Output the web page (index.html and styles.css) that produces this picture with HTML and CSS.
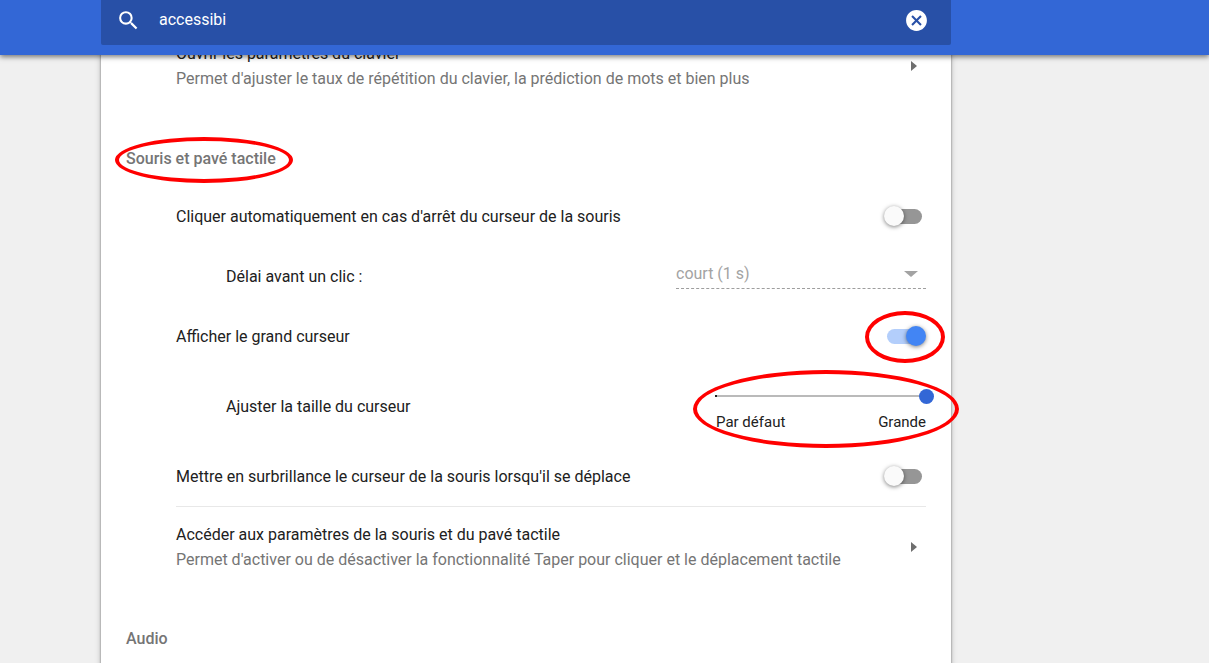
FILE: index.html
```html
<!DOCTYPE html>
<html lang="fr">
<head>
    <meta charset="UTF-8">
    <meta name="viewport" content="width=device-width, initial-scale=1.0">
    <title>Paramètres</title>
    <link rel="stylesheet" href="styles.css">
</head>
<body>
    <header class="toolbar">
        <form class="search" role="search">
            <svg class="search-icon" viewBox="0 0 24 24" aria-hidden="true">
                <path d="M15.5 14h-.79l-.28-.27A6.47 6.47 0 0 0 16 9.5 6.5 6.5 0 1 0 9.5 16c1.61 0 3.09-.59 4.23-1.57l.27.28v.79l5 4.99L20.49 19l-4.99-5zm-6 0C7.01 14 5 11.99 5 9.5S7.01 5 9.5 5 14 7.01 14 9.5 11.99 14 9.5 14z"/>
            </svg>
            <input type="text" id="search" value="accessibi" aria-label="Rechercher">
            <button type="reset" class="clear" aria-label="Effacer">
                <svg viewBox="0 0 24 24" aria-hidden="true">
                    <path d="M12 2C6.47 2 2 6.47 2 12s4.47 10 10 10 10-4.47 10-10S17.53 2 12 2zm5 13.59L15.59 17 12 13.41 8.41 17 7 15.59 10.59 12 7 8.41 8.41 7 12 10.59 15.59 7 17 8.41 13.41 12 17 15.59z"/>
                </svg>
            </button>
        </form>
    </header>

    <main>
        <div class="card">
            <a href="#clavier" class="row tall">
                <span class="text">
                    Ouvrir les paramètres du clavier
                    <small>Permet d'ajuster le taux de répétition du clavier, la prédiction de mots et bien plus</small>
                </span>
                <span class="arrow"></span>
            </a>

            <h2><span class="marked mark-title">Souris et pavé tactile</span></h2>

            <div class="row">
                <label for="autoclick">Cliquer automatiquement en cas d'arrêt du curseur de la souris</label>
                <input type="checkbox" class="toggle" id="autoclick">
            </div>
            <div class="row sub">
                <label for="delay">Délai avant un clic :</label>
                <div class="dropdown">
                    <select id="delay" disabled>
                        <option>court (1 s)</option>
                    </select>
                </div>
            </div>
            <div class="row">
                <label for="large-cursor">Afficher le grand curseur</label>
                <span class="marked mark-toggle">
                    <input type="checkbox" class="toggle" id="large-cursor" checked>
                </span>
            </div>
            <div class="row sub tall">
                <label for="cursor-size">Ajuster la taille du curseur</label>
                <div class="slider marked mark-slider">
                    <input type="range" id="cursor-size" min="0" max="100" value="100">
                    <div class="slider-labels">
                        <span>Par défaut</span>
                        <span>Grande</span>
                    </div>
                </div>
            </div>
            <div class="row">
                <label for="highlight">Mettre en surbrillance le curseur de la souris lorsqu'il se déplace</label>
                <input type="checkbox" class="toggle" id="highlight">
            </div>
            <a href="#souris" class="row tall line">
                <span class="text">
                    Accéder aux paramètres de la souris et du pavé tactile
                    <small>Permet d'activer ou de désactiver la fonctionnalité Taper pour cliquer et le déplacement tactile</small>
                </span>
                <span class="arrow"></span>
            </a>

            <h2>Audio</h2>
        </div>
    </main>
</body>
</html>
```

FILE: styles.css
```css
* {
    box-sizing: border-box;
}

body {
    margin: 0;
    height: 100vh;
    display: flex;
    flex-direction: column;
    overflow: hidden;
    background-color: #f0f0f0;
    color: #212121;
    font-family: Roboto, sans-serif;
    font-size: 16px;
    line-height: 25px;
}

input,
select,
button {
    font: inherit;
    margin: 0;
}

/* Toolbar */
.toolbar {
    position: relative;
    z-index: 1;
    flex: none;
    padding: 0 20px 10px 101px;
    background-color: #3367d6;
    box-shadow: 0 2px 5px rgba(0, 0, 0, 0.5);
}

.search {
    display: flex;
    align-items: center;
    max-width: 850px;
    height: 45px;
    padding: 0 22px 5px 15px;
    border-radius: 0 0 2px 2px;
    background-color: #2850a7;
}

.search svg {
    display: block;
    width: 25px;
    height: 25px;
    fill: #fff;
}

.search input {
    flex: 1;
    min-width: 0;
    margin-left: 18px;
    padding: 0 0 2px;
    border: none;
    outline: none;
    background: none;
    color: #fff;
}

.clear {
    padding: 0;
    border: none;
    background: none;
    cursor: pointer;
}

/* Settings card, scrolled a little under the toolbar */
main {
    flex: 1;
    min-height: 0;
    padding-left: 101px;
    padding-right: 20px;
}

.card {
    max-width: 850px;
    min-height: 100%;
    margin-top: -29px;
    padding: 0 25px 30px;
    background-color: #fff;
    box-shadow: 0 0 2px rgba(0, 0, 0, 0.4), 0 2px 6px rgba(0, 0, 0, 0.25);
}

h2 {
    margin: 0;
    padding: 40px 0 15px;
    color: #757575;
    font-size: 16px;
    font-weight: 500;
}

.row {
    display: flex;
    align-items: center;
    justify-content: space-between;
    min-height: 60px;
    margin-left: 50px;
    color: inherit;
    text-decoration: none;
}

.row.sub {
    margin-left: 100px;
}

.row.tall {
    min-height: 80px;
}

.row.line {
    border-top: 1px solid #e8e8e8;
}

.text small {
    display: block;
    color: #757575;
    font-size: 16px;
}

.arrow {
    margin-right: 9px;
    border: 5px solid transparent;
    border-left: 6px solid #6e6e6e;
    border-right: none;
}

/* Toggle */
.toggle {
    position: relative;
    display: block;
    width: 42px;
    height: 20px;
    appearance: none;
    cursor: pointer;
}

.toggle::before {
    content: "";
    position: absolute;
    top: 3px;
    left: 3px;
    width: 35px;
    height: 15px;
    border-radius: 8px;
    background-color: #969696;
}

.toggle::after {
    content: "";
    position: absolute;
    top: 0;
    left: 0;
    width: 20px;
    height: 20px;
    border-radius: 50%;
    background-color: #fafafa;
    box-shadow: 0 1px 4px rgba(0, 0, 0, 0.5);
}

.toggle:checked::before {
    background-color: #b3cefb;
}

.toggle:checked::after {
    left: 22px;
    background-color: #4285f4;
}

/* Drop-down */
.dropdown {
    position: relative;
    width: 250px;
    margin-bottom: 5px;
}

.dropdown::after {
    content: "";
    position: absolute;
    top: 12px;
    right: 8px;
    border: 7px solid transparent;
    border-top: 6px solid #a3a3a3;
    border-bottom: none;
}

.dropdown select {
    display: block;
    width: 100%;
    height: 30px;
    padding: 0;
    appearance: none;
    border: none;
    border-bottom: 1px dashed #9e9e9e;
    border-radius: 0;
    background: none;
    color: #a3a3a3;
    opacity: 1;
}

/* Slider */
.slider {
    width: 210px;
    padding-top: 10px;
}

.slider input {
    display: block;
    width: calc(100% + 16px);
    height: 15px;
    margin: 2px -8px 6px;
    appearance: none;
    background: linear-gradient(#212121, #212121) 7px 6px / 2px 2px no-repeat,
        linear-gradient(#bababa, #bababa) 8px 6px / calc(100% - 16px) 2px no-repeat;
}

.slider input::-webkit-slider-thumb {
    width: 15px;
    height: 15px;
    appearance: none;
    border-radius: 50%;
    background-color: #3367d6;
}

.slider-labels {
    display: flex;
    justify-content: space-between;
    font-size: 15px;
}

/* Red rings round the things to look at */
.marked {
    position: relative;
}

.marked::after {
    content: "";
    position: absolute;
    border: 4px solid #f00;
    border-radius: 50%;
    pointer-events: none;
}

.mark-title::after {
    inset: -12px -17px -15px -11px;
}

.mark-toggle::after {
    inset: -15px -19px -17px;
}

.mark-slider::after {
    inset: -7px -33px -13px -23px;
}
```
